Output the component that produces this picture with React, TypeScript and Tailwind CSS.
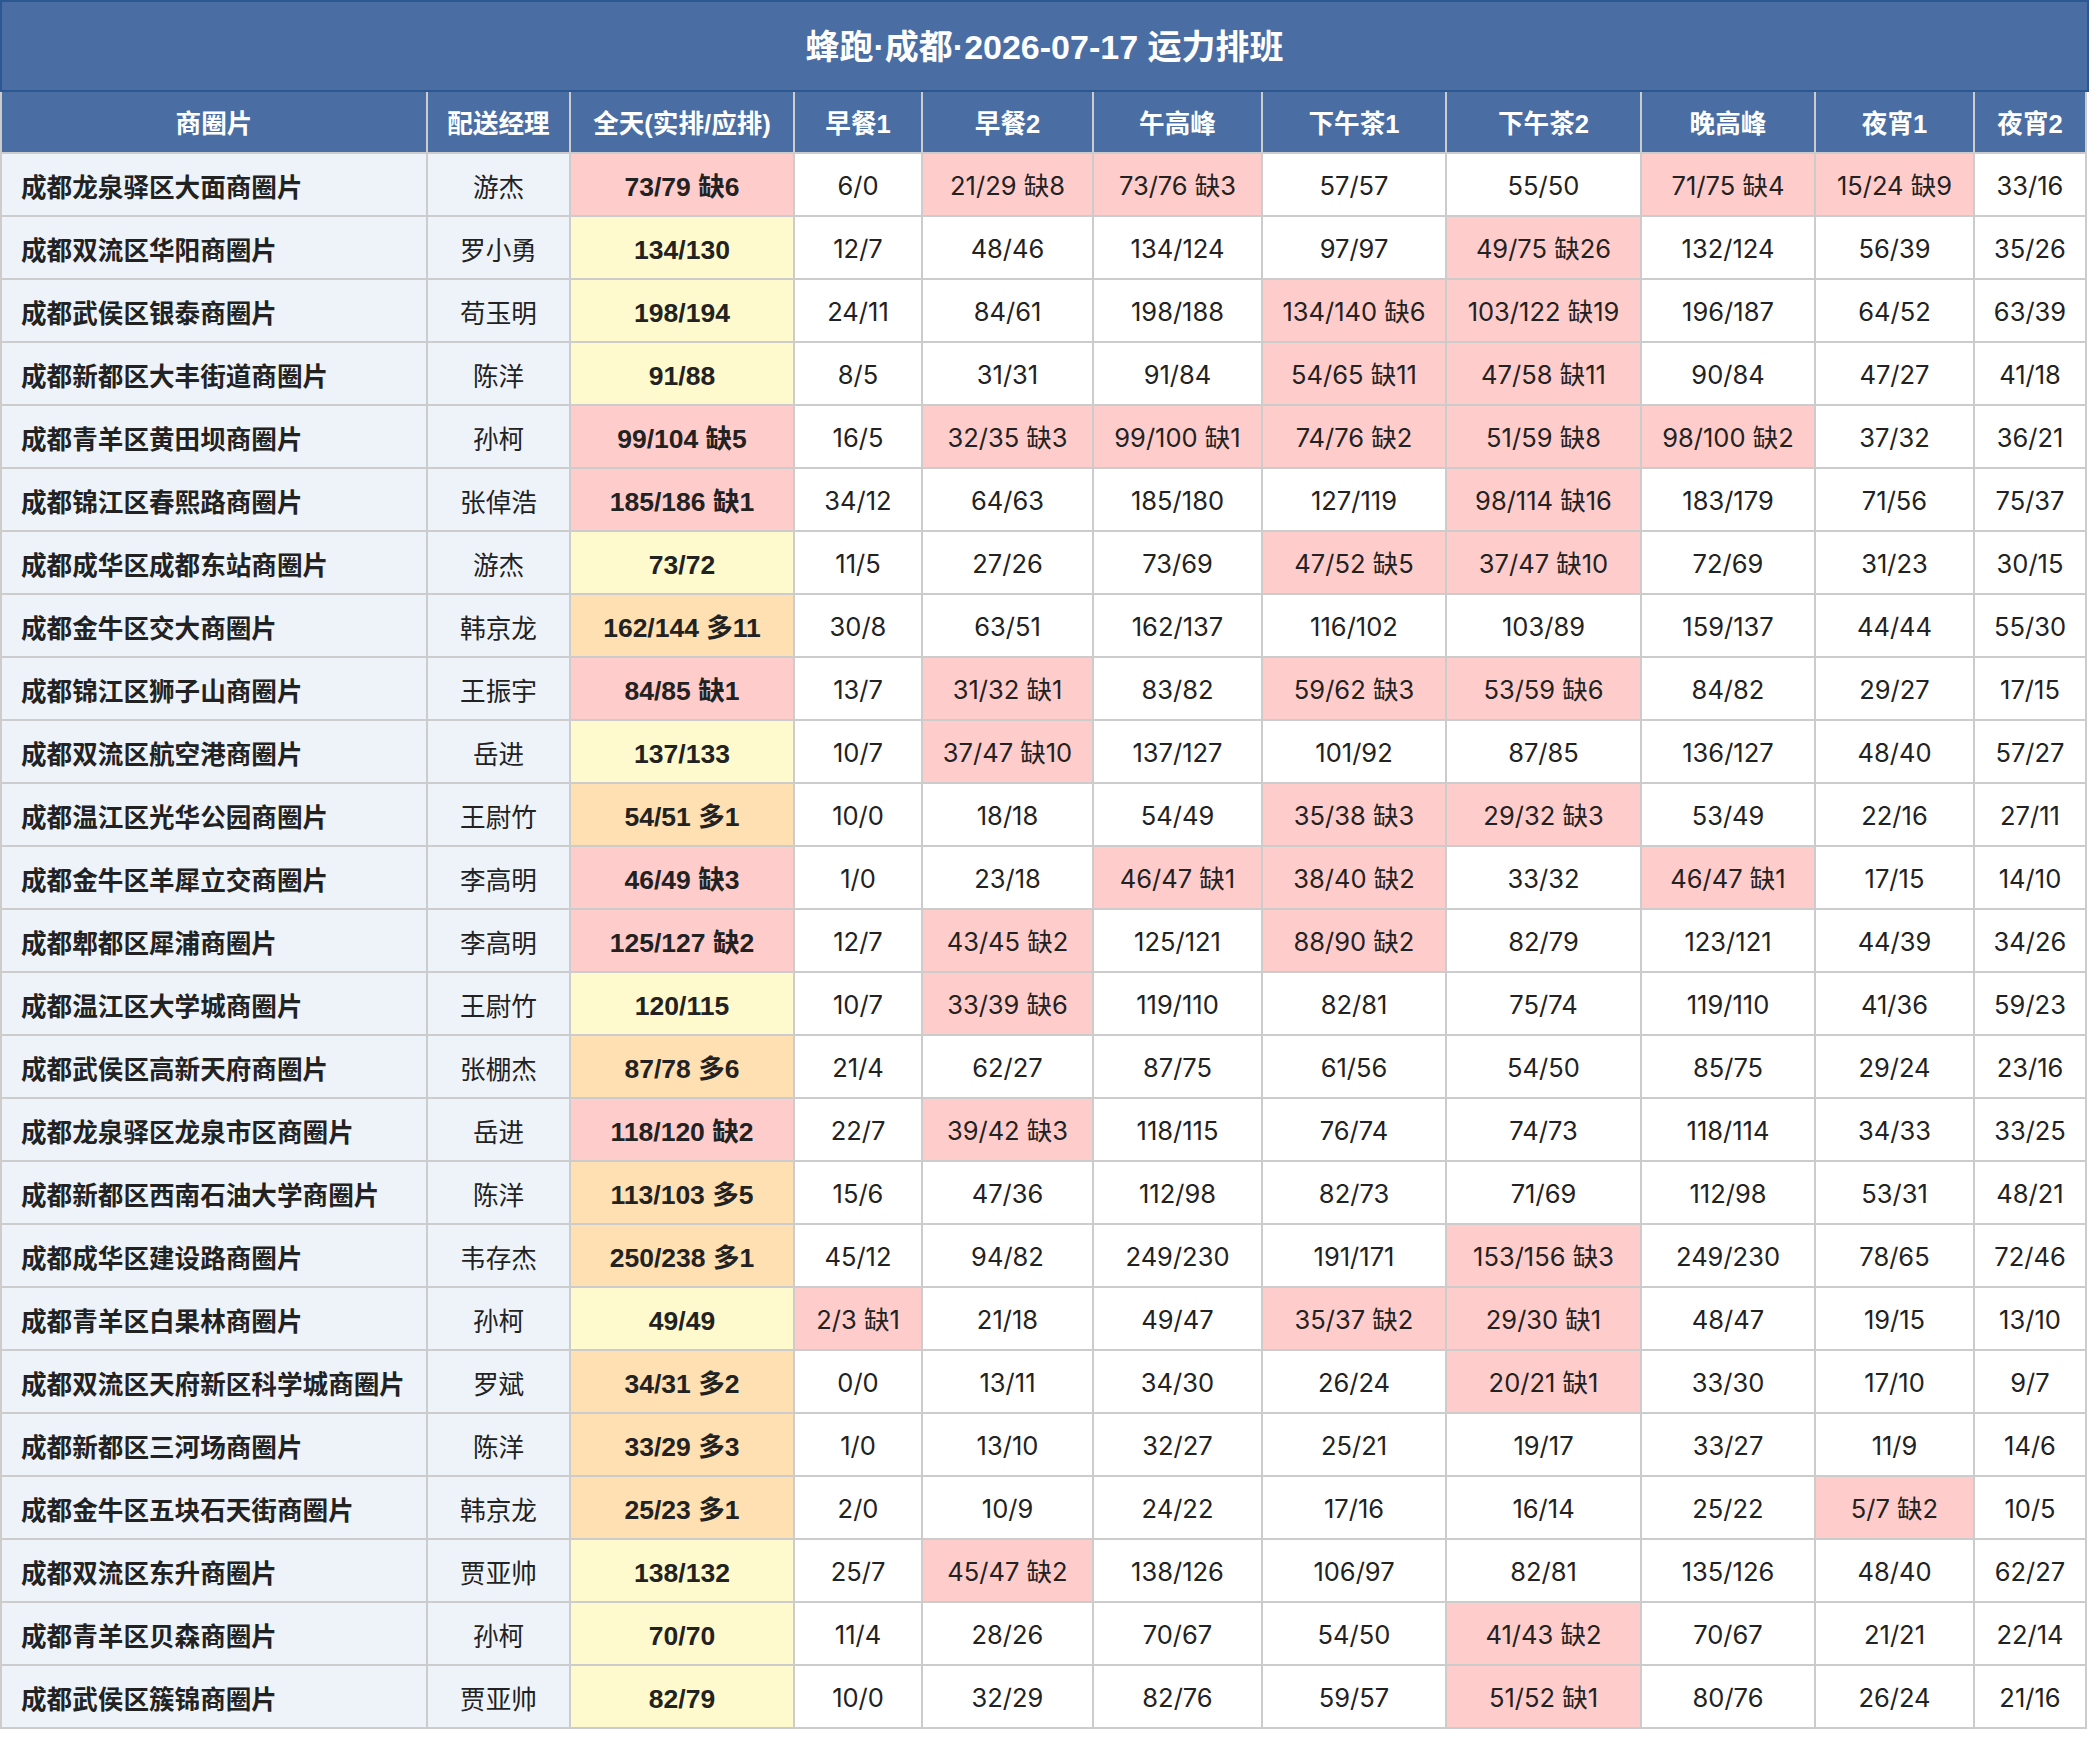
import React from "react";

type Row = [string, string, string, string, string, string, string, string, string, string, string];

const rows: Row[] = [
  ["成都龙泉驿区大面商圈片", "游杰", "73/79 缺6", "6/0", "21/29 缺8", "73/76 缺3", "57/57", "55/50", "71/75 缺4", "15/24 缺9", "33/16"],
  ["成都双流区华阳商圈片", "罗小勇", "134/130", "12/7", "48/46", "134/124", "97/97", "49/75 缺26", "132/124", "56/39", "35/26"],
  ["成都武侯区银泰商圈片", "苟玉明", "198/194", "24/11", "84/61", "198/188", "134/140 缺6", "103/122 缺19", "196/187", "64/52", "63/39"],
  ["成都新都区大丰街道商圈片", "陈洋", "91/88", "8/5", "31/31", "91/84", "54/65 缺11", "47/58 缺11", "90/84", "47/27", "41/18"],
  ["成都青羊区黄田坝商圈片", "孙柯", "99/104 缺5", "16/5", "32/35 缺3", "99/100 缺1", "74/76 缺2", "51/59 缺8", "98/100 缺2", "37/32", "36/21"],
  ["成都锦江区春熙路商圈片", "张倬浩", "185/186 缺1", "34/12", "64/63", "185/180", "127/119", "98/114 缺16", "183/179", "71/56", "75/37"],
  ["成都成华区成都东站商圈片", "游杰", "73/72", "11/5", "27/26", "73/69", "47/52 缺5", "37/47 缺10", "72/69", "31/23", "30/15"],
  ["成都金牛区交大商圈片", "韩京龙", "162/144 多11", "30/8", "63/51", "162/137", "116/102", "103/89", "159/137", "44/44", "55/30"],
  ["成都锦江区狮子山商圈片", "王振宇", "84/85 缺1", "13/7", "31/32 缺1", "83/82", "59/62 缺3", "53/59 缺6", "84/82", "29/27", "17/15"],
  ["成都双流区航空港商圈片", "岳进", "137/133", "10/7", "37/47 缺10", "137/127", "101/92", "87/85", "136/127", "48/40", "57/27"],
  ["成都温江区光华公园商圈片", "王尉竹", "54/51 多1", "10/0", "18/18", "54/49", "35/38 缺3", "29/32 缺3", "53/49", "22/16", "27/11"],
  ["成都金牛区羊犀立交商圈片", "李高明", "46/49 缺3", "1/0", "23/18", "46/47 缺1", "38/40 缺2", "33/32", "46/47 缺1", "17/15", "14/10"],
  ["成都郫都区犀浦商圈片", "李高明", "125/127 缺2", "12/7", "43/45 缺2", "125/121", "88/90 缺2", "82/79", "123/121", "44/39", "34/26"],
  ["成都温江区大学城商圈片", "王尉竹", "120/115", "10/7", "33/39 缺6", "119/110", "82/81", "75/74", "119/110", "41/36", "59/23"],
  ["成都武侯区高新天府商圈片", "张棚杰", "87/78 多6", "21/4", "62/27", "87/75", "61/56", "54/50", "85/75", "29/24", "23/16"],
  ["成都龙泉驿区龙泉市区商圈片", "岳进", "118/120 缺2", "22/7", "39/42 缺3", "118/115", "76/74", "74/73", "118/114", "34/33", "33/25"],
  ["成都新都区西南石油大学商圈片", "陈洋", "113/103 多5", "15/6", "47/36", "112/98", "82/73", "71/69", "112/98", "53/31", "48/21"],
  ["成都成华区建设路商圈片", "韦存杰", "250/238 多1", "45/12", "94/82", "249/230", "191/171", "153/156 缺3", "249/230", "78/65", "72/46"],
  ["成都青羊区白果林商圈片", "孙柯", "49/49", "2/3 缺1", "21/18", "49/47", "35/37 缺2", "29/30 缺1", "48/47", "19/15", "13/10"],
  ["成都双流区天府新区科学城商圈片", "罗斌", "34/31 多2", "0/0", "13/11", "34/30", "26/24", "20/21 缺1", "33/30", "17/10", "9/7"],
  ["成都新都区三河场商圈片", "陈洋", "33/29 多3", "1/0", "13/10", "32/27", "25/21", "19/17", "33/27", "11/9", "14/6"],
  ["成都金牛区五块石天街商圈片", "韩京龙", "25/23 多1", "2/0", "10/9", "24/22", "17/16", "16/14", "25/22", "5/7 缺2", "10/5"],
  ["成都双流区东升商圈片", "贾亚帅", "138/132", "25/7", "45/47 缺2", "138/126", "106/97", "82/81", "135/126", "48/40", "62/27"],
  ["成都青羊区贝森商圈片", "孙柯", "70/70", "11/4", "28/26", "70/67", "54/50", "41/43 缺2", "70/67", "21/21", "22/14"],
  ["成都武侯区簇锦商圈片", "贾亚帅", "82/79", "10/0", "32/29", "82/76", "59/57", "51/52 缺1", "80/76", "26/24", "21/16"],
];

const headers = ["商圈片", "配送经理", "全天(实排/应排)", "早餐1", "早餐2", "午高峰", "下午茶1", "下午茶2", "晚高峰", "夜宵1", "夜宵2"];

const GRID =
  "grid grid-cols-[426px_143px_224px_128px_171px_169px_184px_195px_174px_159px_112px]";

function totalBg(v: string) {
  if (v.includes("缺")) return "bg-[#ffcccc]";
  if (v.includes("多")) return "bg-[#ffe0b3]";
  return "bg-[#fffacd]";
}

export default function App() {
  return (
    <div className="w-[2097px] min-h-[1739px] bg-white">
      <div className="w-[2089px]">
        <div className="h-[92px] pt-[3px] border-2 border-[#2d5791] bg-[#4a6ea4] flex items-center justify-center text-white font-bold text-[34px] font-['Liberation_Sans','Noto_Sans_CJK_SC',sans-serif]">
          蜂跑·成都·2026-07-17 运力排班
        </div>
        <div className="border-l-2 border-[#cccccc]">
          <div className={GRID}>
            {headers.map((h, i) => (
              <div
                key={i}
                className="h-[62px] pt-[4px] bg-[#4a6ea4] border-r-2 border-b-2 border-[#cccccc] flex items-center justify-center text-white font-bold text-[25.6px] font-['Liberation_Sans','Noto_Sans_CJK_SC',sans-serif] whitespace-nowrap"
              >
                {h}
              </div>
            ))}
          </div>
          {rows.map((r, ri) => (
            <div key={ri} className={GRID}>
              <div className="h-[63px] pt-[3px] bg-[#eef3fa] border-r-2 border-b-2 border-[#cccccc] flex items-center pl-[19px] text-[#222] font-bold text-[25.6px] font-['Noto_Sans_CJK_SC',sans-serif] whitespace-nowrap">
                {r[0]}
              </div>
              <div className="h-[63px] pt-[3px] bg-[#eef3fa] border-r-2 border-b-2 border-[#cccccc] flex items-center justify-center text-[#222] text-[25.6px] font-['Noto_Sans_CJK_SC',sans-serif] whitespace-nowrap">
                {r[1]}
              </div>
              <div
                className={`h-[63px] pt-[6px] ${totalBg(r[2])} border-r-2 border-b-2 border-[#cccccc] flex items-center justify-center text-[#222] font-bold text-[26.5px] font-['Liberation_Sans','Noto_Sans_CJK_SC',sans-serif] whitespace-nowrap`}
              >
                {r[2]}
              </div>
              {r.slice(3).map((v, ci) => (
                <div
                  key={ci}
                  className={`h-[63px] pt-[3px] ${v.includes("缺") ? "bg-[#ffcccc]" : "bg-white"} border-r-2 border-b-2 border-[#cccccc] flex items-center justify-center text-[#222] text-[25.5px] font-['Inter','Noto_Sans_CJK_SC',sans-serif] whitespace-nowrap`}
                >
                  {v}
                </div>
              ))}
            </div>
          ))}
        </div>
      </div>
    </div>
  );
}
